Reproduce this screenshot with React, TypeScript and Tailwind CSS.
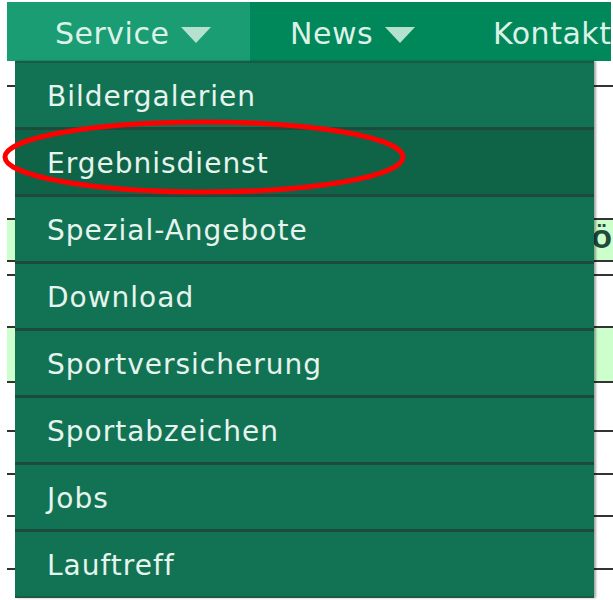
import React from "react"

const font = { fontFamily: '"DejaVu Sans", Verdana, sans-serif' }

const items = [
  "Bildergalerien",
  "Ergebnisdienst",
  "Spezial-Angebote",
  "Download",
  "Sportversicherung",
  "Sportabzeichen",
  "Jobs",
  "Lauftreff",
]

function Caret() {
  return (
    <svg width="30" height="16" viewBox="0 0 30 16" className="mt-[2px] shrink-0">
      <polygon points="0,0 30,0 15,16" fill="#b4e2cf" />
    </svg>
  )
}

export default function App() {
  return (
    <div className="relative w-[613px] h-[600px] overflow-hidden bg-white pt-[2px]" style={font}>
      {/* top navigation */}
      <nav className="ml-[7px] mr-[2px] h-[59px] flex items-stretch bg-[#00875a] text-[30px] leading-none tracking-[0.5px] text-[#dcf2e8]">
        <div className="w-[243px] shrink-0 flex items-center gap-[12px] pl-[48px] pt-[5px] bg-[#1a9d73]">
          <span>Service</span>
          <Caret />
        </div>
        <div className="flex items-center gap-[12px] pl-[40px] pr-[40px] pt-[5px]">
          <span>News</span>
          <Caret />
        </div>
        <div className="flex items-center pl-[38px] pt-[5px] whitespace-nowrap">
          <span>Kontakt</span>
        </div>
      </nav>

      {/* page content behind the menu */}
      <div className="ml-[7px] flex flex-col">
        <div className="h-[26px] border-b-2 border-[#333]" />
        <div className="h-[133px] border-b-2 border-[#333]" />
        <div className="h-[42px] bg-[#ccffcc] border-b-2 border-[#333] flex items-center justify-end pr-[1px] text-[24px] font-bold text-[#1f4a3c]">
          Ö
        </div>
        <div className="h-[14px] border-b-2 border-[#333]" />
        <div className="h-[52px] border-b-2 border-[#333]" />
        <div className="h-[55px] bg-[#ccffcc] border-b-2 border-[#333]" />
        <div className="h-[49px] border-b-2 border-[#333]" />
        <div className="h-[43px] border-b-2 border-[#333]" />
        <div className="h-[42px] border-b-2 border-[#333]" />
        <div className="h-[53px] border-b-2 border-[#333]" />
      </div>

      {/* dropdown menu */}
      <ul className="absolute left-[15px] top-[61px] w-[579px] border-t-2 border-b-2 border-[#1b5a44] bg-[#127354] shadow-[2px_0_2px_rgba(0,0,0,0.35)]">
        {items.map((item, i) => (
          <li
            key={item}
            className={
              "flex items-center pl-[32px] pt-[4px] text-[28px] leading-none tracking-[1px] text-[#e6f4ee] " +
              (i < items.length - 1 ? "h-[67px] border-b-[3px] border-[#1d4b3b] " : "h-[64px] ") +
              (i === 1 ? "bg-[#0f6447]" : "")
            }
          >
            {item}
          </li>
        ))}
      </ul>

      {/* red annotation ellipse */}
      <svg className="absolute left-0 top-[118px] pointer-events-none" width="410" height="80" viewBox="0 0 410 80">
        <ellipse cx="204" cy="39" rx="199" ry="35" fill="none" stroke="#ff0000" strokeWidth="5" />
      </svg>
    </div>
  )
}
